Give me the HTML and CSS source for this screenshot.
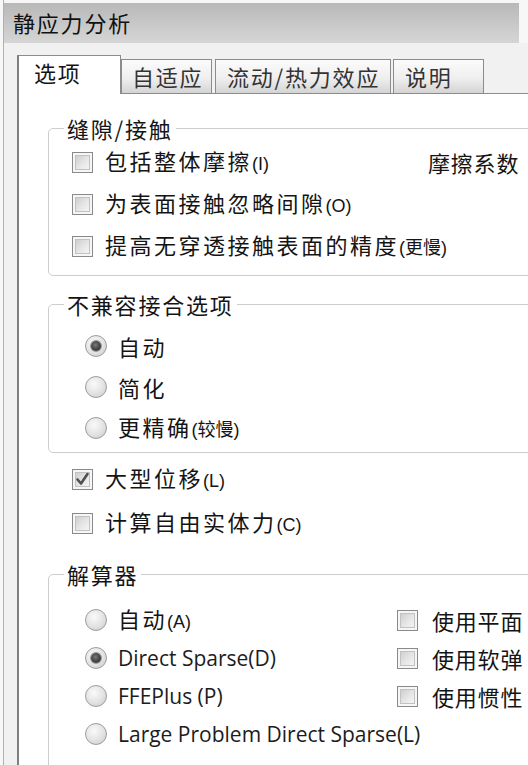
FILE: index.html
```html
<!DOCTYPE html>
<html lang="zh-CN">
<head>
<meta charset="utf-8">
<title>静应力分析</title>
<link rel="stylesheet" href="styles.css">
</head>
<body>
<div class="window">
  <div class="titlebar">静应力分析</div>
  <div class="main">
    <div class="tabs">
      <div class="tab tab-sel">选项</div>
      <div class="tab tab-w2">自适应</div>
      <div class="tab tab-w3">流动/热力效应</div>
      <div class="tab tab-w4">说明</div>
    </div>
    <div class="panel">
      <fieldset class="group g1">
        <legend>缝隙/接触</legend>
        <div class="row row-split">
          <label class="opt"><span class="cb"></span><span class="lbl">包括整体摩擦<span class="mn">(I)</span></span></label>
          <span class="lbl tight">摩擦系数</span>
        </div>
        <div class="row">
          <label class="opt"><span class="cb"></span><span class="lbl">为表面接触忽略间隙<span class="mn">(O)</span></span></label>
        </div>
        <div class="row">
          <label class="opt"><span class="cb"></span><span class="lbl">提高无穿透接触表面的精度<span class="mn">(更慢)</span></span></label>
        </div>
      </fieldset>

      <fieldset class="group g2">
        <legend>不兼容接合选项</legend>
        <div class="row">
          <label class="opt ropt"><span class="rb rb-on"></span><span class="lbl">自动</span></label>
        </div>
        <div class="row">
          <label class="opt ropt"><span class="rb"></span><span class="lbl">简化</span></label>
        </div>
        <div class="row">
          <label class="opt ropt"><span class="rb"></span><span class="lbl">更精确<span class="mn">(较慢)</span></span></label>
        </div>
      </fieldset>

      <div class="loose">
        <div class="row">
          <label class="opt"><span class="cb cb-on"><svg viewBox="0 0 21 21" width="21" height="21"><path d="M5.5 10.5 L9 14.5 L15.5 5" fill="none" stroke="#505050" stroke-width="2.6" stroke-linecap="round" stroke-linejoin="round"/></svg></span><span class="lbl">大型位移<span class="mn">(L)</span></span></label>
        </div>
        <div class="row">
          <label class="opt"><span class="cb"></span><span class="lbl">计算自由实体力<span class="mn">(C)</span></span></label>
        </div>
      </div>

      <fieldset class="group g3">
        <legend>解算器</legend>
        <div class="solver">
          <label class="opt ropt"><span class="rb"></span><span class="lbl">自动<span class="mn">(A)</span></span></label>
          <label class="opt copt"><span class="cb"></span><span class="lbl tight">使用平面</span></label>
          <label class="opt ropt"><span class="rb rb-on"></span><span class="lat">Direct Sparse(D)</span></label>
          <label class="opt copt"><span class="cb"></span><span class="lbl tight">使用软弹</span></label>
          <label class="opt ropt"><span class="rb"></span><span class="lat">FFEPlus (P)</span></label>
          <label class="opt copt"><span class="cb"></span><span class="lbl tight">使用惯性</span></label>
          <label class="opt ropt"><span class="rb"></span><span class="lat">Large Problem Direct Sparse(L)</span></label>
        </div>
      </fieldset>
    </div>
  </div>
</div>
</body>
</html>
```
FILE: styles.css
```css
* {
  box-sizing: border-box;
}

html, body {
  margin: 0;
  padding: 0;
  background: #f7f7f7;
}

body {
  font-family: "Noto Sans CJK SC", "Noto Sans", sans-serif;
  color: #141414;
  width: 528px;
  height: 765px;
  overflow: hidden;
}

.window {
  margin-left: 3px;
  padding-top: 3px;
  border-left: 1px solid #b0b0b0;
  height: 765px;
  display: flex;
  flex-direction: column;
  overflow: hidden;
}

.titlebar {
  width: 515px;
  height: 40px;
  flex: none;
  background: linear-gradient(#b8b8b8, #cdcdcd 70%, #d5d5d5);
  font-size: 22px;
  letter-spacing: 1.8px;
  line-height: 38px;
  padding-left: 9px;
  color: #111;
}

.main {
  flex: 1;
  display: flex;
  flex-direction: column;
  background: #f1f1f1;
  padding-left: 13px;
}

.tabs {
  height: 50px;
  flex: none;
  display: flex;
  align-items: flex-end;
  gap: 2px;
}

.tab {
  height: 34px;
  border: 1px solid #8c8c8c;
  border-bottom: none;
  background: linear-gradient(#fbfbfb, #efefef 55%, #d4d4d4);
  font-size: 22px;
  letter-spacing: 1.8px;
  line-height: 33px;
  padding-left: 10px;
  color: #333;
  white-space: nowrap;
}

.tab-sel {
  position: relative;
  z-index: 1;
  width: 104px;
  height: 39px;
  margin-bottom: -1px;
  margin-right: -2px;
  border-left: 2px solid #7e7e7e;
  background: #fff;
  color: #141414;
  padding-left: 15px;
  line-height: 32px;
}

.tab-w2 {
  width: 91px;
}

.tab-w3 {
  width: 176px;
  margin-left: 1px;
  padding-left: 11px;
}

.tab-w4 {
  width: 91px;
  padding-left: 11px;
}

.panel {
  flex: 1;
  background: #fff;
  border-top: 1px solid #8c8c8c;
  border-left: 2px solid #7e7e7e;
  overflow: hidden;
}

.group {
  margin: 0 -40px 0 29px;
  padding: 0 0 0 23px;
  border: 1px solid #cdcdcd;
  border-radius: 5px;
  min-width: 0;
}

.group legend {
  margin-left: -8px;
  padding: 0 3px;
  font-size: 22px;
  line-height: 26px;
  letter-spacing: 1.8px;
  color: #141414;
}

.g1 {
  margin-top: 21px;
  padding-bottom: 8px;
}

.g2 {
  margin-top: 15px;
  padding-top: 8px;
  padding-bottom: 4px;
}

.g3 {
  margin-top: 16px;
  padding-top: 14px;
  padding-bottom: 20px;
}

.row {
  height: 42px;
  display: flex;
  align-items: center;
}

.g2 .row {
  height: 41px;
}

.row-split {
  display: grid;
  grid-template-columns: 356px auto;
  align-items: center;
}

.loose {
  margin: 4px 0 0 53px;
}

.loose .row {
  height: 44px;
}

.opt {
  display: flex;
  align-items: center;
  gap: 12px;
  white-space: nowrap;
}

.ropt {
  margin-left: 13px;
  gap: 11px;
}

.copt {
  gap: 14px;
}

.lbl {
  font-size: 22px;
  letter-spacing: 2.5px;
  line-height: 28px;
}

.lbl.tight {
  letter-spacing: 0.8px;
}

.mn {
  font-family: "Liberation Sans Narrow", "Liberation Sans", "Noto Sans CJK SC", sans-serif;
  font-size: 18px;
  letter-spacing: 0;
}

.lat {
  font-family: "Open Sans", "Noto Sans", sans-serif;
  font-size: 21px;
  line-height: 28px;
  color: #1c1c1c;
}

.solver {
  display: grid;
  grid-template-columns: 325px auto;
  grid-auto-rows: 38px;
  align-items: center;
}

.cb {
  flex: none;
  width: 21px;
  height: 21px;
  border: 1px solid #8a8a8a;
  padding: 2px;
  background: #f6f6f6;
  display: flex;
}

.cb::before {
  content: "";
  flex: 1;
  border: 1px solid #c2c2c2;
  background: linear-gradient(135deg, #cfcfcf, #e8e8e8 60%, #f4f4f4);
}

.cb-on {
  padding: 0;
  position: relative;
}

.cb-on svg {
  position: absolute;
  left: -1px;
  top: -1px;
}

.cb-on::before {
  margin: 2px;
}

.rb {
  flex: none;
  width: 22px;
  height: 22px;
  border-radius: 50%;
  border: 1px solid #9d9d9d;
  background: radial-gradient(circle at 40% 35%, #fafafa, #e2e2e2 55%, #c8c8c8);
  display: flex;
  align-items: center;
  justify-content: center;
}

.rb-on::before {
  content: "";
  width: 10px;
  height: 10px;
  border-radius: 50%;
  background: radial-gradient(circle at 45% 40%, #7a7a7a, #333 70%);
  box-shadow: 0 0 0 1px #9a9a9a;
}
```
